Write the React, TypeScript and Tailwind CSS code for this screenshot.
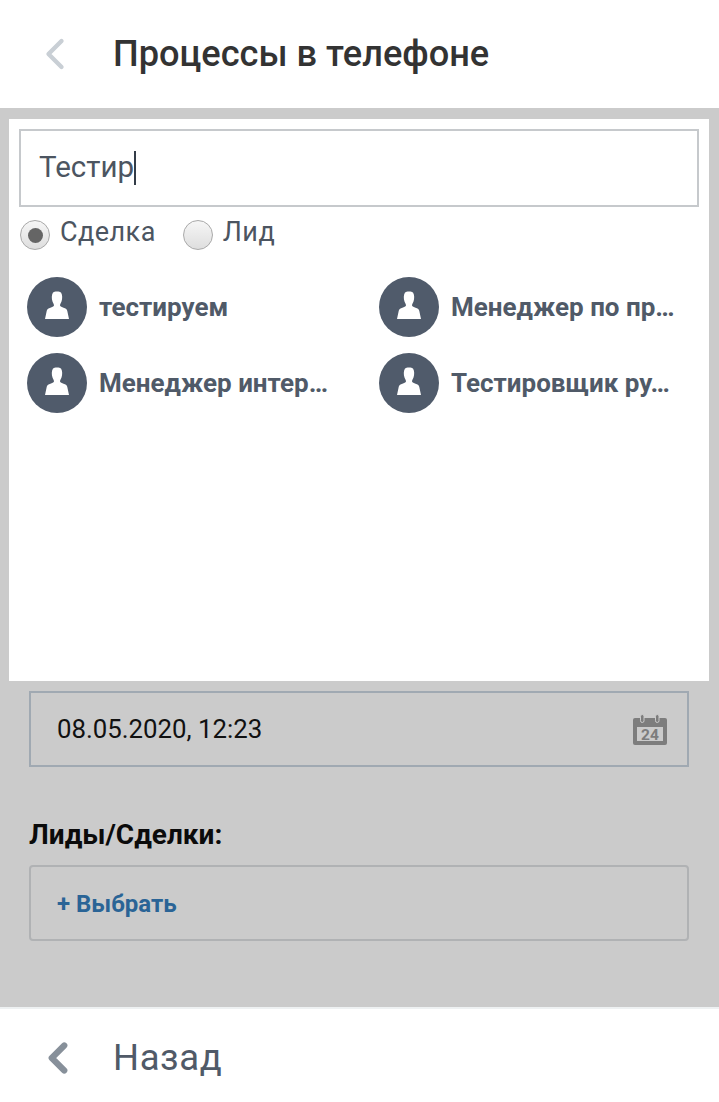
import { ChevronLeft } from "lucide-react";

const results = [
  "тестируем",
  "Менеджер по пр…",
  "Менеджер интер…",
  "Тестировщик ру…",
];

function Avatar() {
  return (
    <div className="flex h-[60px] w-[60px] shrink-0 items-center justify-center rounded-full bg-[#505b6b] pb-[4px]">
      <svg width="24" height="28" viewBox="0 0 24 28" fill="#ffffff">
        <path d="M8 1.5 C9 0 15 0 16 1.5 C17.5 3.5 17.5 8 16.5 10.5 C16 12 15 13 15 14.5 C15 15.5 18 16.5 20.5 17.5 C21.5 18 22 19 22.3 20 L24 28 L0 28 L1.7 20 C2 19 2.5 18 3.5 17.5 C6 16.5 9 15.5 9 14.5 C9 13 8 12 7.5 10.5 C6.5 8 6.5 3.5 8 1.5 Z" />
      </svg>
    </div>
  );
}

function Radio({ checked, label }: { checked?: boolean; label: string }) {
  return (
    <div className="flex items-start gap-[10px]">
      <span className="flex h-[30px] w-[30px] items-center justify-center rounded-full border border-[#a9a9a9] bg-gradient-to-b from-[#f6f6f6] to-[#dedede]">
        {checked && <span className="h-[15px] w-[15px] rounded-full bg-[#656565]" />}
      </span>
      <span className="text-[27px] leading-[24px] tracking-[0.45px] text-[#4c5561]">{label}</span>
    </div>
  );
}

export default function App() {
  return (
    <div className="flex h-[1102px] w-[719px] flex-col overflow-hidden bg-[#cbcbcb] font-['Roboto',sans-serif]">
      {/* Header */}
      <header className="flex h-[108px] shrink-0 items-center bg-white">
        <ChevronLeft className="ml-[29px] h-[52px] w-[52px] text-[#c9cfd5]" strokeWidth={2} />
        <h1 className="ml-[32px] pt-[1px] text-[36.2px] font-medium leading-none text-[#333333]">Процессы в телефоне</h1>
      </header>

      {/* Search popup */}
      <section className="mx-[9px] mt-[11px] h-[562px] w-[700px] shrink-0 bg-white px-[10px] pt-[10px]">
        <div className="flex h-[78px] items-center border-2 border-[#c6c9cc] pl-[18px]">
          <span className="text-[29.5px] leading-none text-[#4c5561]">Тестир</span>
          <span className="h-[34px] w-[1.5px] bg-[#333c48]" />
        </div>
        <div className="ml-[1px] mt-[13px] flex gap-[27px]">
          <Radio checked label="Сделка" />
          <Radio label="Лид" />
        </div>
        <div className="mt-[27px] grid grid-cols-[352px_1fr] gap-y-[16px] pl-[8px]">
          {results.map((name) => (
            <div key={name} className="flex min-w-0 items-center gap-[12px]">
              <Avatar />
              <span className="whitespace-nowrap text-[26px] font-bold leading-none text-[#505a68]">{name}</span>
            </div>
          ))}
        </div>
      </section>

      {/* Form behind popup */}
      <div className="flex-1 pl-[29px] pr-[30px] pt-[10px]">
        <div className="flex h-[76px] items-center justify-between border-2 border-[#a0a9b2] pl-[26px] pr-[20px]">
          <span className="pt-[1px] text-[25.8px] leading-none text-[#111111]">08.05.2020, 12:23</span>
          <svg width="34" height="31" viewBox="0 0 34 31">
            <path d="M2 4 H32 Q34 4 34 6 V29 Q34 31 32 31 H2 Q0 31 0 29 V6 Q0 4 2 4 Z" fill="#7d7d7d" />
            <rect x="7.5" y="0.5" width="3.5" height="8" rx="1.75" fill="#7d7d7d" stroke="#cbcbcb" strokeWidth="1" />
            <rect x="22.5" y="0.5" width="3.5" height="8" rx="1.75" fill="#7d7d7d" stroke="#cbcbcb" strokeWidth="1" />
            <rect x="4" y="13" width="26" height="14" fill="#cbcbcb" />
            <text x="17" y="25.5" textAnchor="middle" fontSize="15.5" fontWeight="700" fill="#7d7d7d" fontFamily="Roboto, sans-serif">24</text>
          </svg>
        </div>
        <div className="mt-[53px] text-[28px] font-bold leading-[30px] text-[#0b0b0b]">Лиды/Сделки:</div>
        <div className="mt-[15px] flex h-[76px] items-center rounded-[4px] border-2 border-[#b0b2b4] pl-[26px]">
          <span className="pt-[1px] text-[24px] font-bold leading-none text-[#2a6496]">+ Выбрать</span>
        </div>
      </div>

      {/* Footer */}
      <footer className="flex h-[95px] shrink-0 items-center border-t-2 border-[#eef1f2] bg-white pt-[5px]">
        <ChevronLeft className="ml-[33px] h-[50px] w-[50px] text-[#87909a]" strokeWidth={3} />
        <span className="ml-[30px] text-[36.5px] leading-none tracking-[0.6px] text-[#505a68]">Назад</span>
      </footer>
    </div>
  );
}
